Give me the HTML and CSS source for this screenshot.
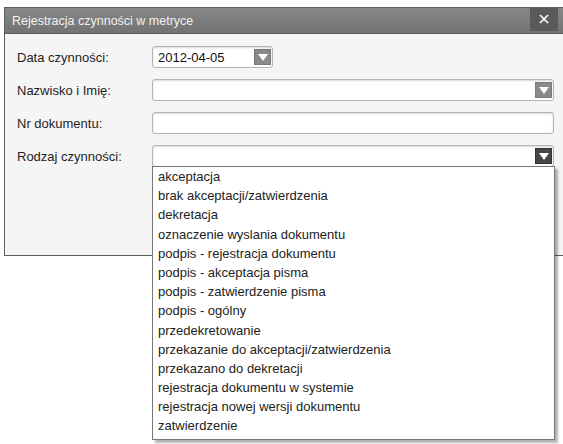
FILE: index.html
```html
<!DOCTYPE html>
<html lang="pl">
<head>
<meta charset="utf-8">
<link rel="stylesheet" href="styles.css">
</head>
<body>
<div class="dialog">
  <div class="titlebar">
    <span class="title">Rejestracja czynności w metryce</span>
    <span class="close">×</span>
  </div>
  <div class="form">
    <div class="row">
      <label class="label">Data czynności:</label>
      <div class="field date"><span class="value">2012-04-05</span><span class="btn"><span class="tri"></span></span></div>
    </div>
    <div class="row">
      <label class="label">Nazwisko i Imię:</label>
      <div class="field"><span class="value"></span><span class="btn"><span class="tri"></span></span></div>
    </div>
    <div class="row">
      <label class="label">Nr dokumentu:</label>
      <div class="field"><span class="value"></span></div>
    </div>
    <div class="row">
      <label class="label">Rodzaj czynności:</label>
      <div class="field combo">
        <span class="value"></span><span class="btn dark"><span class="tri"></span></span>
        <ul class="list">
          <li>akceptacja</li>
          <li>brak akceptacji/zatwierdzenia</li>
          <li>dekretacja</li>
          <li>oznaczenie wyslania dokumentu</li>
          <li>podpis - rejestracja dokumentu</li>
          <li>podpis - akceptacja pisma</li>
          <li>podpis - zatwierdzenie pisma</li>
          <li>podpis - ogólny</li>
          <li>przedekretowanie</li>
          <li>przekazanie do akceptacji/zatwierdzenia</li>
          <li>przekazano do dekretacji</li>
          <li>rejestracja dokumentu w systemie</li>
          <li>rejestracja nowej wersji dokumentu</li>
          <li>zatwierdzenie</li>
        </ul>
      </div>
    </div>
  </div>
</div>
</body>
</html>
```
FILE: styles.css
```css
html, body {
  margin: 0;
  padding: 0;
  background: #ffffff;
}
body {
  min-height: 444px;
  font-family: "Liberation Sans", Arial, sans-serif;
  font-size: 13px;
  color: #222;
  overflow: visible;
}
.dialog {
  margin: 7px 0 0 4px;
  width: 559px;
  height: 249px;
  border: 1px solid #5e5e5e;
  border-right: none;
  background: #f5f5f5;
  box-sizing: border-box;
  position: relative;
}
.titlebar {
  height: 25px;
  background: linear-gradient(#878787, #737373);
  display: flex;
  align-items: center;
  justify-content: space-between;
  border-bottom: 1px solid #5a5a5a;
  padding-left: 7px;
}
.title {
  color: #f2f2f2;
  font-size: 12.5px;
}
.close {
  width: 28px;
  height: 23px;
  margin-right: 5px;
  background: #5a5a5a;
  color: #fff;
  font-size: 16px;
  line-height: 22px;
  text-align: center;
  font-family: "DejaVu Sans", sans-serif;
  align-self: flex-start;
}
.form {
  padding: 12px 0 0 12px;
  display: flex;
  flex-direction: column;
  gap: 11px;
}
.row {
  display: flex;
  align-items: center;
}
.label {
  width: 135px;
  flex: none;
  color: #1e1e1e;
}
.field {
  position: relative;
  width: 402px;
  height: 22px;
  box-sizing: border-box;
  border: 1px solid #b4b4b4;
  border-radius: 3px;
  background: #fff;
  box-shadow: inset 0 1px 2px rgba(0,0,0,0.15);
  display: flex;
  align-items: center;
  justify-content: space-between;
  padding: 0 1px 0 5px;
}
.field.date {
  width: 121px;
}
.value {
  color: #111;
}
.btn {
  width: 17px;
  height: 16px;
  background: #8a8a8a;
  display: flex;
  align-items: center;
  justify-content: center;
  border: 1px solid #7a7a7a;
  box-sizing: border-box;
}
.btn.dark {
  background: #464646;
  border-color: #333;
}
.tri {
  width: 0;
  height: 0;
  border-left: 5px solid transparent;
  border-right: 5px solid transparent;
  border-top: 7px solid #fff;
  margin-top: 1px;
}
.list {
  position: absolute;
  top: 20px;
  left: -1px;
  width: 403px;
  margin: 0;
  padding: 0 0 3px 0;
  list-style: none;
  background: #fff;
  border: 1px solid #777;
  box-sizing: border-box;
  box-shadow: 3px 3px 2px rgba(0,0,0,0.3);
  z-index: 2;
}
.list li {
  height: 19.2px;
  line-height: 19.2px;
  padding-left: 5px;
  color: #222;
  white-space: nowrap;
}
```
